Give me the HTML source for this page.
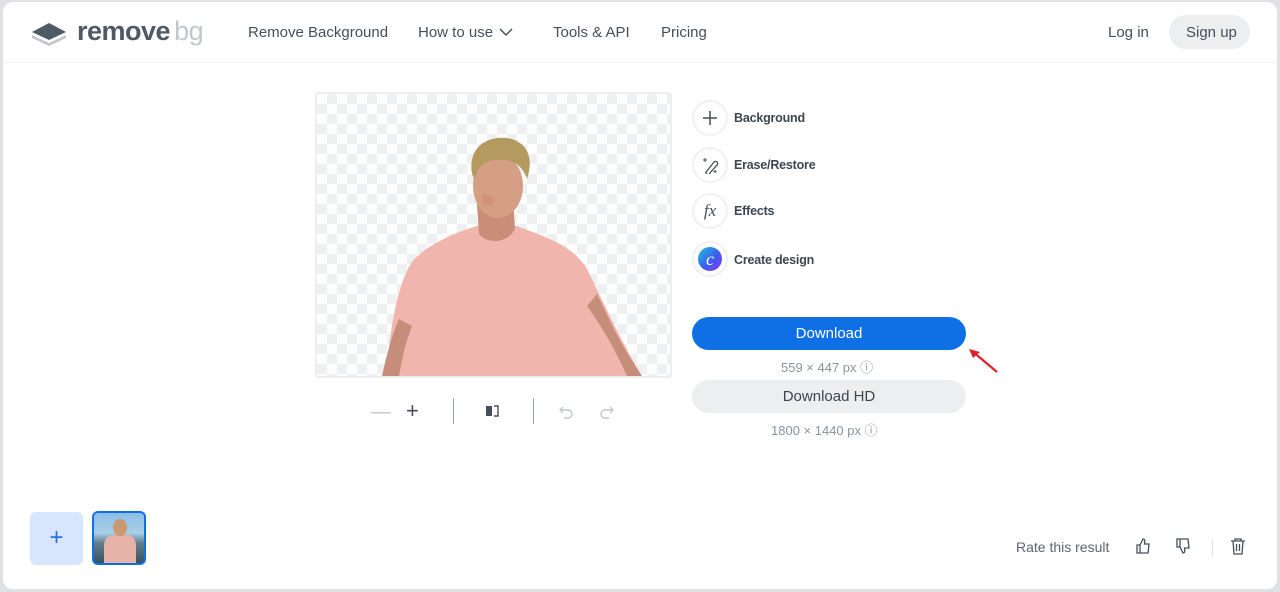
<!DOCTYPE html>
<html><head><meta charset="utf-8"><style>
*{box-sizing:border-box;margin:0;padding:0}
body{width:1280px;height:592px;background:#dfe1e5;font-family:"Liberation Sans",sans-serif;position:relative;overflow:hidden;color:#454f5b}
.page{position:absolute;left:3px;top:2px;width:1274px;height:587px;background:#fff;border-radius:10px}
.hdr{position:absolute;left:0;top:0;right:0;height:61px;border-bottom:1px solid #f0f1f3}
.t{position:absolute;white-space:nowrap}
.nav{font-size:15px;color:#454f5b;top:22px}
.circ{position:absolute;left:689px;width:36px;height:36px;border-radius:50%;border:2px solid #eef0f2;display:flex;align-items:center;justify-content:center}
.lbl{position:absolute;left:731px;font-size:12.5px;font-weight:bold;color:#3c4650;letter-spacing:-0.2px}
.checker{position:absolute;left:312px;top:90px;width:357px;height:286px;border:2px solid #eceef0;border-radius:3px;overflow:hidden;
background-color:#fff;background-image:linear-gradient(45deg,#eef0f2 25%,transparent 25%,transparent 75%,#eef0f2 75%),linear-gradient(45deg,#eef0f2 25%,transparent 25%,transparent 75%,#eef0f2 75%);background-size:20px 20px;background-position:0 0,10px 10px}
</style></head><body>
<div class="page">
<div class="hdr">
<svg style="position:absolute;left:27px;top:19px" width="38" height="26" viewBox="0 0 38 26"><path d="M2 14 L19 22 L36 14 L36 17 L19 25 L2 17Z" fill="#c2c7cd"/><path d="M2 11 L19 2 L36 11 L19 19Z" fill="#4e5a66"/></svg>
<div class="t" style="left:74px;top:14px;font-size:27px;font-weight:bold;color:#4e5a66;letter-spacing:-0.5px">remove<span style="color:#c2c7cd;font-weight:normal;margin-left:4px">bg</span></div>
<div class="t nav" style="left:245px">Remove Background</div>
<div class="t nav" style="left:415px">How to use</div>
<svg style="position:absolute;left:496px;top:25px" width="14" height="10"><path d="M1 2 L7 8 L13 2" stroke="#454f5b" stroke-width="1.5" fill="none"/></svg>
<div class="t nav" style="left:550px">Tools &amp; API</div>
<div class="t nav" style="left:658px">Pricing</div>
<div class="t nav" style="left:1105px">Log in</div>
<div style="position:absolute;left:1166px;top:13px;width:81px;height:34px;border-radius:17px;background:#eceef0"></div>
<div class="t nav" style="left:1183px">Sign up</div>
</div>

<div class="checker">
<svg width="357" height="286" viewBox="0 0 357 286">
<path d="M70 282 C72 240 80 190 95 168 C110 150 140 138 160 132 L200 132 C225 142 255 150 270 175 C285 205 300 240 325 282Z" fill="#f0b6ad"/>
<path d="M325 282 C300 245 290 220 280 200 L270 212 C290 240 300 260 310 282Z" fill="#c68d7a"/>
<path d="M65 282 C70 260 75 240 82 225 L95 232 C88 250 85 265 82 282Z" fill="#c68d7a"/>
<path d="M160 110 L162 140 C170 150 190 150 198 135 L196 105Z" fill="#c98e78"/>
<ellipse cx="181" cy="92" rx="25" ry="32" fill="#d49f85"/>
<path d="M155 80 C150 50 175 40 195 45 C215 52 215 70 210 85 C205 70 195 65 180 66 C168 66 160 72 158 86Z" fill="#b59a5f"/>
<path d="M165 100 L178 103 L175 112 L165 110Z" fill="#c7826a" opacity=".4"/>
</svg>
</div>

<div class="t" style="left:368px;top:399px;font-size:20px;color:#c2c7cd">—</div>
<div class="t" style="left:403px;top:396px;font-size:22px;color:#454f5b">+</div>
<div style="position:absolute;left:450px;top:396px;width:1px;height:26px;background:#9aa2ab"></div>
<svg style="position:absolute;left:482px;top:402px" width="16" height="14"><rect x="1" y="2" width="6" height="10" fill="#454f5b"/><path d="M9 2 H13 V12 H9" stroke="#454f5b" stroke-width="1.4" fill="none"/></svg>
<div style="position:absolute;left:530px;top:396px;width:1px;height:26px;background:#9aa2ab"></div>
<svg style="position:absolute;left:555px;top:401px" width="60" height="16"><path d="M5 4 L2 7 L5 10 M2 7 H10 A4 4 0 0 1 10 15 H6" stroke="#c2c7cd" stroke-width="1.4" fill="none"/><path d="M52 4 L55 7 L52 10 M55 7 H47 A4 4 0 0 0 47 15 H51" stroke="#c2c7cd" stroke-width="1.4" fill="none"/></svg>

<div class="circ" style="top:98px"><svg width="16" height="16"><path d="M8 1V15M1 8H15" stroke="#454f5b" stroke-width="1.5"/></svg></div>
<div class="lbl" style="top:109px">Background</div>
<div class="circ" style="top:145px"><svg width="18" height="18"><path d="M6 15 L13 6 A2 2 0 0 1 16 9 L9 17 A2 2 0 0 1 5 16Z" stroke="#454f5b" stroke-width="1.3" fill="none"/><path d="M4 2V6M2 4H6M14 14v3M12.5 15.5h3" stroke="#454f5b" stroke-width="1"/></svg></div>
<div class="lbl" style="top:156px">Erase/Restore</div>
<div class="circ" style="top:191px"><span style="font-family:'Liberation Serif',serif;font-style:italic;font-size:17px;color:#454f5b">fx</span></div>
<div class="lbl" style="top:202px">Effects</div>
<div class="circ" style="top:239px"><div style="width:24px;height:24px;border-radius:50%;background:linear-gradient(135deg,#1ec3d8,#3b5cf0 55%,#8a3cf2);color:#fff;font-family:'Liberation Serif',serif;font-style:italic;font-size:18px;text-align:center;line-height:24px">c</div></div>
<div class="lbl" style="top:251px">Create design</div>

<div style="position:absolute;left:689px;top:315px;width:274px;height:33px;border-radius:17px;background:#0f70e6;color:#fff;font-size:15px;text-align:center;line-height:33px">Download</div>
<svg style="position:absolute;left:963px;top:345px" width="34" height="28"><path d="M31 25 L6 4" stroke="#e0202a" stroke-width="2.2"/><path d="M3 2 L14 5 L7 11Z" fill="#e0202a"/></svg>
<div class="t" style="left:778px;top:355px;font-size:13px;color:#8a939d">559 × 447 px ⓘ</div>
<div style="position:absolute;left:689px;top:378px;width:274px;height:33px;border-radius:17px;background:#eceef0;color:#3c4650;font-size:15px;text-align:center;line-height:33px">Download HD</div>
<div class="t" style="left:768px;top:418px;font-size:13px;color:#8a939d">1800 × 1440 px ⓘ</div>

<div style="position:absolute;left:27px;top:510px;width:53px;height:53px;border-radius:6px;background:#d7e5fd;color:#2b6ee6;font-size:24px;text-align:center;line-height:51px">+</div>
<div style="position:absolute;left:89px;top:509px;width:54px;height:54px;border-radius:6px;border:2px solid #0f70e6;overflow:hidden;background:linear-gradient(#8cbde8 0,#a9cfe8 40%,#5f7d8e 60%,#39535c 100%)"><div style="position:absolute;left:10px;top:22px;width:32px;height:30px;border-radius:10px 10px 0 0;background:#e7b2a7"></div><div style="position:absolute;left:19px;top:6px;width:14px;height:17px;border-radius:50%;background:#c9996f"></div></div>

<div class="t" style="left:1013px;top:537px;font-size:14px;color:#5b6570">Rate this result</div>
<svg style="position:absolute;left:1132px;top:535px" width="60" height="18"><path d="M2 8H5V16H2Z M5 8 L8 2 C10 2 10 4 9.5 7 H14 L13 16 H5" stroke="#454f5b" stroke-width="1.3" fill="none"/><path d="M42 10H45V2H42Z M45 10 L48 16 C50 16 50 14 49.5 11 H54 L53 2 H45" stroke="#454f5b" stroke-width="1.3" fill="none"/></svg>
<div style="position:absolute;left:1209px;top:537px;width:1px;height:17px;background:#dfe1e5"></div>
<svg style="position:absolute;left:1227px;top:535px" width="16" height="18"><path d="M1 4H15 M5 4V2H11V4 M3 4L4 17H12L13 4 M6.5 7V14 M9.5 7V14" stroke="#454f5b" stroke-width="1.3" fill="none"/></svg>
</div>
</body></html>
